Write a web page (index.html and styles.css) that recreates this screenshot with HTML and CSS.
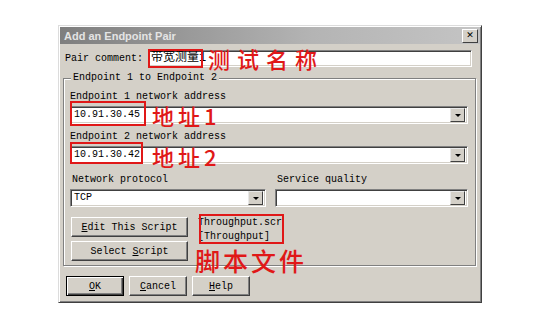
FILE: index.html
```html
<!DOCTYPE html>
<html lang="zh-CN">
<head>
  <meta charset="UTF-8" />
  <meta name="viewport" content="width=device-width, initial-scale=1.0" />
  <title>Add an Endpoint Pair</title>
  <link rel="stylesheet" href="styles.css">
</head>
<body>
  <div class="dialog">
    <div class="titlebar">
      <span class="title">Add an Endpoint Pair</span>
      <span class="close">✕</span>
    </div>
    <div class="content">
      <div class="comment-row">
        <label>Pair comment:</label>
        <div class="textbox"><span class="cjk">带宽测量1</span></div>
      </div>

      <fieldset class="group">
        <legend>Endpoint 1 to Endpoint 2</legend>
        <div class="field-label">Endpoint 1 network address</div>
        <div class="combo"><span class="value">10.91.30.45</span><span class="drop"></span></div>

        <div class="field-label">Endpoint 2 network address</div>
        <div class="combo"><span class="value">10.91.30.42</span><span class="drop"></span></div>

        <div class="pair">
          <div>
            <div class="field-label">Network protocol</div>
            <div class="combo"><span class="value">TCP</span><span class="drop"></span></div>
          </div>
          <div>
            <div class="field-label">Service quality</div>
            <div class="combo"><span class="value"></span><span class="drop"></span></div>
          </div>
        </div>

        <div class="script-row">
          <div class="script-buttons">
            <button type="button" class="btn wide"><u>E</u>dit This Script</button>
            <button type="button" class="btn wide">Select <u>S</u>cript</button>
          </div>
          <div class="script-name">Throughput.scr<br>[Throughput]</div>
        </div>
      </fieldset>

      <div class="actions">
        <button type="button" class="btn default"><u>O</u>K</button>
        <button type="button" class="btn"><u>C</u>ancel</button>
        <button type="button" class="btn"><u>H</u>elp</button>
      </div>
    </div>

    <!-- red notes drawn over the dialog -->
    <div class="box box-comment"></div>
    <div class="note note-comment">测试名称</div>
    <div class="box box-ip1"></div>
    <div class="note note-ip1">地址1</div>
    <div class="box box-ip2"></div>
    <div class="note note-ip2">地址2</div>
    <div class="box box-script"></div>
    <div class="note note-script">脚本文件</div>
  </div>
</body>
</html>
```

FILE: styles.css
```css
* { box-sizing: border-box; }
body {
  margin: 0;
  background: #fff;
  font-family: "Liberation Mono", "Noto Sans CJK SC", monospace;
  font-size: 10px;
  color: #000;
}

.dialog {
  position: relative;
  margin: 25px 0 0 58px;
  width: 424px;
  height: 278px;
  background: #d4d0c8;
  border: 1px solid;
  border-color: #dcdcdc #404040 #404040 #dcdcdc;
  box-shadow: inset 1px 1px 0 #fff, inset -1px -1px 0 #808080;
}

.titlebar {
  display: flex;
  align-items: center;
  justify-content: space-between;
  height: 17px;
  margin: 1px 1px 0;
  padding: 0 2px 0 4px;
  background: linear-gradient(to right, #7e7e7e, #b4b4b4 60%, #c4c4c4);
}
.title {
  font-family: "Liberation Sans", sans-serif;
  font-weight: bold;
  font-size: 11px;
  color: #e4e4e4;
}
.close {
  width: 16px;
  height: 14px;
  display: flex;
  align-items: center;
  justify-content: center;
  background: #d4d0c8;
  border: 1px solid;
  border-color: #fff #404040 #404040 #fff;
  font-family: "DejaVu Sans", sans-serif;
  font-weight: bold;
  font-size: 9px;
  line-height: 1;
}

.content { padding: 6px 5px 0 4px; }

.comment-row {
  display: flex;
  align-items: center;
  height: 17px;
  margin: 0 4px 0 2px;
  gap: 5px;
}
.textbox, .combo {
  background: #fff;
  border: 1px solid;
  border-color: #808080 #fff #fff #808080;
  box-shadow: inset 1px 1px 0 #404040, inset -1px -1px 0 #d4d0c8;
}
.textbox {
  flex: 1;
  height: 17px;
  padding: 1px 0 0 2px;
}
.cjk { font-size: 12px; line-height: 13px; }

.group {
  margin: 5px 0 0;
  padding: 7px 7px 4px 6px;
  border: 1px solid #808080;
  box-shadow: inset 1px 1px 0 #fff, 1px 1px 0 #fff;
}
.group legend {
  padding: 0 2px;
  margin-left: 1px;
  line-height: 12px;
  background: #d4d0c8;
}

.field-label { line-height: 12px; margin-top: 7px; }
.group > .field-label:first-of-type { margin-top: 0; }

.combo {
  display: flex;
  align-items: center;
  height: 18px;
  margin-top: 3px;
  padding: 2px;
}
.combo .value { flex: 1; padding-left: 1px; line-height: 12px; }
.drop {
  width: 15px;
  height: 14px;
  display: flex;
  align-items: center;
  justify-content: center;
  background: #d4d0c8;
  border: 1px solid;
  border-color: #e8e8e8 #404040 #404040 #e8e8e8;
}
.drop::after {
  content: "";
  border: 3px solid transparent;
  border-top: 3px solid #000;
  margin-top: 3px;
}

.pair {
  display: grid;
  grid-template-columns: 196px 1fr;
  gap: 9px;
  margin-top: 10px;
}
.pair .field-label { margin-top: 0; margin-left: 2px; }

.script-row {
  display: flex;
  gap: 10px;
  margin-top: 10px;
}
.script-buttons {
  display: flex;
  flex-direction: column;
  gap: 4px;
  margin-left: 1px;
}
.script-name {
  width: 84px;
  overflow: hidden;
  white-space: nowrap;
  line-height: 14px;
  margin-top: -1px;
}

.btn {
  height: 20px;
  width: 58px;
  padding: 0;
  font-family: inherit;
  font-size: 10px;
  color: #000;
  background: #d4d0c8;
  border: 1px solid;
  border-color: #fff #404040 #404040 #fff;
  box-shadow: inset -1px -1px 0 #808080;
}
.btn.wide { width: 117px; }
.btn.default {
  border-color: #000;
  box-shadow: inset 1px 1px 0 #fff, inset -1px -1px 0 #404040, inset -2px -2px 0 #808080;
}

.actions {
  display: flex;
  gap: 5px;
  margin: 10px 0 0 3px;
}

/* red annotations */
.box {
  position: absolute;
  border: 2px solid #e01818;
}
.box-comment { left: 89px; top: 23px; width: 55px; height: 19px; }
.box-ip1 { left: 11px; top: 75px; width: 76px; height: 25px; }
.box-ip2 { left: 11px; top: 116px; width: 73px; height: 22px; }
.box-script { left: 140px; top: 188px; width: 85px; height: 30px; }

.note {
  position: absolute;
  color: #e01818;
  font-family: "Noto Sans CJK SC", sans-serif;
  font-weight: 500;
  line-height: 1;
  white-space: nowrap;
}
.note-comment { left: 149px; top: 21px; font-size: 22px; letter-spacing: 7px; }
.note-ip1 { left: 93px; top: 78px; font-size: 22px; letter-spacing: 4px; }
.note-ip2 { left: 93px; top: 119px; font-size: 22px; letter-spacing: 4px; }
.note-script { left: 136px; top: 222px; font-size: 25px; letter-spacing: 3px; }
```
